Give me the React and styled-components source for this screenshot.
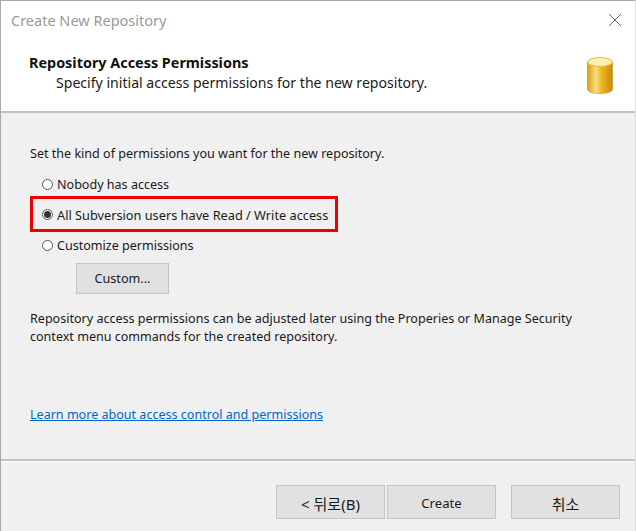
import React from "react";
import styled, { createGlobalStyle } from "styled-components";

const GlobalStyle = createGlobalStyle`
  html, body {
    margin: 0;
    padding: 0;
    background: #f0f0f0;
  }
`;

const Window = styled.div`
  box-sizing: border-box;
  width: 636px;
  height: 531px;
  display: flex;
  flex-direction: column;
  overflow: hidden;
  border-top: 1px solid #a9a9a9;
  border-left: 1px solid #a9a9a9;
  border-right: 1px solid #e0e0e0;
  background: #f0f0f0;
  font-family: "Noto Sans", "Noto Sans CJK KR", sans-serif;
  font-size: 12.55px;
  color: #1a1a1a;
`;

const TitleBar = styled.div`
  height: 38px;
  display: flex;
  align-items: center;
  justify-content: space-between;
  padding: 0 14px 0 10px;
  background: #fff;
  color: #9a9a9a;
  font-size: 14.5px;
`;

const Header = styled.div`
  height: 72px;
  display: flex;
  justify-content: space-between;
  padding: 0 22px 0 28px;
  background: #fff;
  border-bottom: 2px solid #c0c0c0;
`;

const HeaderTitle = styled.div`
  font-weight: 700;
  font-size: 14.4px;
  line-height: 20px;
  color: #111;
  margin-top: 14px;
`;

const HeaderSub = styled.div`
  font-size: 14.1px;
  line-height: 20px;
  margin-left: 27px;
`;

const IconSlot = styled.div`
  margin-top: 18px;
`;

const Body = styled.div`
  flex: 1;
  display: flex;
  flex-direction: column;
  padding: 32px 0 0 29px;
`;

const Intro = styled.div`
  line-height: 18px;
`;

const RadioGroup = styled.div`
  display: flex;
  flex-direction: column;
  margin-top: 11px;
`;

const RadioRow = styled.div`
  display: flex;
  align-items: center;
  gap: 4px;
  height: 20px;
  padding-left: 12px;
`;

const HighlightBox = styled.div`
  box-sizing: border-box;
  width: 308px;
  height: 36px;
  margin: 2px 0 3px 0;
  padding: 1px 0 0 9px;
  border: 3px solid #ee0000;
  display: flex;
  align-items: center;
  gap: 4px;
  white-space: nowrap;
  font-size: 12.75px;
`;

const RadioDot = styled.span`
  box-sizing: border-box;
  width: 11px;
  height: 11px;
  flex: none;
  border-radius: 50%;
  border: 1px solid #555;
  background: #fff;
  display: flex;
  align-items: center;
  justify-content: center;

  &::after {
    content: "";
    display: ${(props) => (props.checked ? "block" : "none")};
    width: 7px;
    height: 7px;
    border-radius: 50%;
    background: #333;
  }
`;

const Button = styled.button`
  box-sizing: border-box;
  width: ${(props) => props.width || 109}px;
  height: 34px;
  margin: 0;
  padding: 2px 0 0;
  background: #e1e1e1;
  border: 1px solid #c4c4c4;
  color: #1a1a1a;
  font-family: inherit;
  font-size: ${(props) => (props.$korean ? 15 : 13.2)}px;
`;

const CustomButton = styled(Button)`
  display: block;
  margin: 8px 0 0 46px;
  height: 31px;
  padding: 0;
  font-size: 12.6px;
`;

const Note = styled.div`
  margin-top: 16px;
  line-height: 18px;
  width: 550px;
`;

const LearnLink = styled.a`
  margin-top: 60px;
  line-height: 18px;
  color: #0066cc;
  text-decoration: underline;
`;

const Footer = styled.div`
  box-sizing: border-box;
  height: 72px;
  display: flex;
  justify-content: flex-end;
  gap: 15px;
  padding: 24px 15px 0 0;
  border-top: 2px solid #c0c0c0;
  box-shadow: inset 0 1px 0 #fff;
`;

const ButtonPair = styled.div`
  display: flex;
  gap: 2px;
`;

const CloseIcon = () => (
  <svg width="12" height="12" viewBox="0 0 12 12">
    <path d="M0 0L12 12M12 0L0 12" stroke="#666" strokeWidth="1" fill="none" />
  </svg>
);

const DatabaseIcon = () => (
  <svg width="26" height="37" viewBox="0 0 26 37">
    <defs>
      <linearGradient id="dbBody" x1="0" x2="1" y1="0" y2="0">
        <stop offset="0" stopColor="#dd9f10" />
        <stop offset="0.35" stopColor="#f8e082" />
        <stop offset="0.55" stopColor="#eeb822" />
        <stop offset="1" stopColor="#c98a08" />
      </linearGradient>
    </defs>
    <path
      d="M0.5 5V32C0.5 35 6 36.5 13 36.5S25.5 35 25.5 32V5Z"
      fill="url(#dbBody)"
      stroke="#c4951a"
      strokeWidth="0.6"
    />
    <ellipse cx="13" cy="5" rx="12.5" ry="4.5" fill="#faeeb0" stroke="#dcae2c" strokeWidth="0.8" />
  </svg>
);

const App = () => (
  <>
    <GlobalStyle />
    <Window>
      <TitleBar>
        <span>Create New Repository</span>
        <CloseIcon />
      </TitleBar>
      <Header>
        <div>
          <HeaderTitle>Repository Access Permissions</HeaderTitle>
          <HeaderSub>Specify initial access permissions for the new repository.</HeaderSub>
        </div>
        <IconSlot>
          <DatabaseIcon />
        </IconSlot>
      </Header>
      <Body>
        <Intro>Set the kind of permissions you want for the new repository.</Intro>
        <RadioGroup>
          <RadioRow>
            <RadioDot />
            Nobody has access
          </RadioRow>
          <HighlightBox>
            <RadioDot checked />
            All Subversion users have Read / Write access
          </HighlightBox>
          <RadioRow>
            <RadioDot />
            Customize permissions
          </RadioRow>
        </RadioGroup>
        <CustomButton width={93}>Custom...</CustomButton>
        <Note>
          Repository access permissions can be adjusted later using the Properies or Manage
          Security context menu commands for the created repository.
        </Note>
        <LearnLink href="#">Learn more about access control and permissions</LearnLink>
      </Body>
      <Footer>
        <ButtonPair>
          <Button $korean>&lt; 뒤로(B)</Button>
          <Button>Create</Button>
        </ButtonPair>
        <Button $korean>취소</Button>
      </Footer>
    </Window>
  </>
);

export default App;
